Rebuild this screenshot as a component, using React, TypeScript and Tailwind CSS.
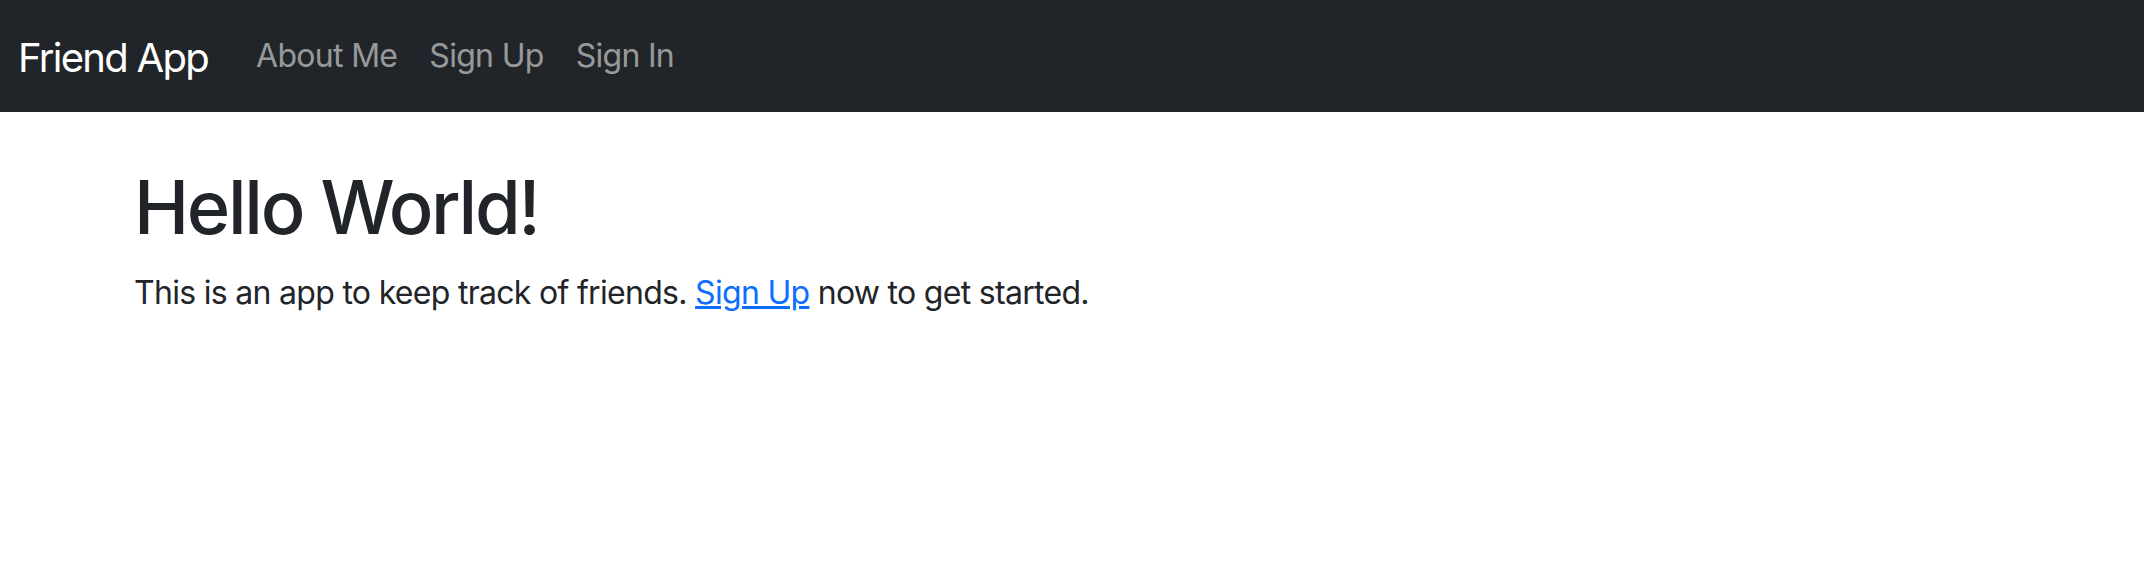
export default function App() {
  const font = { fontFamily: 'Inter, "Liberation Sans", sans-serif' };
  return (
    <div className="min-h-[586px] bg-white" style={font}>
      <nav className="h-[112px] bg-[#212529] flex items-center px-[18px]">
        <a className="text-[40px] text-white mr-[32px] mt-[3px] leading-[1.5] tracking-[-1.7px]" href="#">Friend App</a>
        <div className="flex items-center">
          <a className="text-[32px] text-[#ffffff8c] px-[16px] leading-[1.5] tracking-[-0.7px]" href="#">About Me</a>
          <a className="text-[32px] text-[#ffffff8c] px-[16px] leading-[1.5] tracking-[-0.7px]" href="#">Sign Up</a>
          <a className="text-[32px] text-[#ffffff8c] px-[16px] leading-[1.5] tracking-[-0.7px]" href="#">Sign In</a>
        </div>
      </nav>
      <main className="pl-[134px] pt-[51px] text-[#212529]">
        <h1 className="text-[74px] leading-[1.2] font-medium mb-[17px] tracking-[-2.3px]">Hello World!</h1>
        <p className="text-[32px] leading-[1.5] tracking-[-0.7px]">
          This is an app to keep track of friends.{" "}
          <a className="text-[#0d6efd] underline" href="#">Sign Up</a> now to get started.
        </p>
      </main>
    </div>
  );
}
